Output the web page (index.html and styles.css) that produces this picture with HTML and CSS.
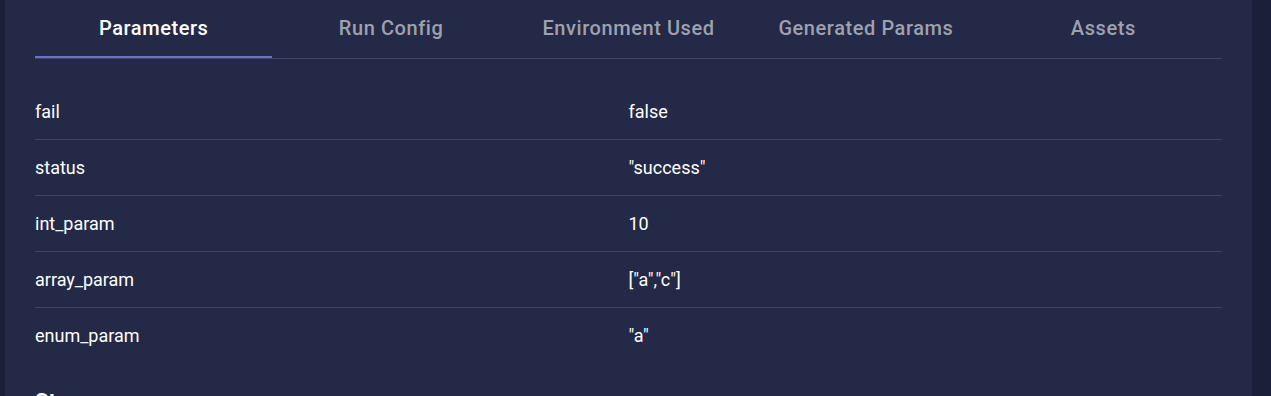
FILE: index.html
```html
<!DOCTYPE html>
<html lang="en">
<head>
    <meta charset="UTF-8">
    <meta name="viewport" content="width=device-width, initial-scale=1.0">
    <link rel="stylesheet" href="styles.css">
    <title>Run Details</title>
</head>
<body>
    <main class="panel">
        <nav class="tabs">
            <div class="tab active">Parameters</div>
            <div class="tab">Run Config</div>
            <div class="tab">Environment Used</div>
            <div class="tab">Generated Params</div>
            <div class="tab">Assets</div>
        </nav>

        <table class="params">
            <tr><td>fail</td><td>false</td></tr>
            <tr><td>status</td><td>"success"</td></tr>
            <tr><td>int_param</td><td>10</td></tr>
            <tr><td>array_param</td><td>["a","c"]</td></tr>
            <tr><td>enum_param</td><td>"a"</td></tr>
        </table>

        <h2 class="section-title">Stages</h2>
    </main>
</body>
</html>
```

FILE: styles.css
```css
body {
    font-family: Roboto, 'Liberation Sans', sans-serif;
    margin: 0;
    padding: 0;
    background-color: #1b1f3a;
    color: #fff;
    height: 396px;
    overflow: hidden;
}

.panel {
    margin: 0 19px 0 5px;
    padding: 0 30px;
    background-color: #232946;
    min-height: 396px;
    box-sizing: border-box;
}

.tabs {
    display: flex;
    border-bottom: 1px solid #41465f;
}

.tab {
    flex: 1;
    height: 58px;
    display: flex;
    align-items: center;
    justify-content: center;
    font-size: 20px;
    font-weight: 500;
    letter-spacing: 0.57px;
    color: #9da1b0;
    box-sizing: border-box;
    border-bottom: 2px solid transparent;
}

.tab.active {
    color: #fff;
    border-bottom-color: #6a71c6;
}

.params {
    width: 100%;
    border-collapse: collapse;
    table-layout: fixed;
    margin-top: 25px;
}

.params td {
    height: 55px;
    padding: 0;
    font-size: 18px;
    border-bottom: 1px solid #41465f;
    vertical-align: middle;
}

.params tr:last-child td {
    border-bottom: none;
}

.section-title {
    margin: 26px 0 0;
    font-size: 22px;
    font-weight: 700;
}
```
